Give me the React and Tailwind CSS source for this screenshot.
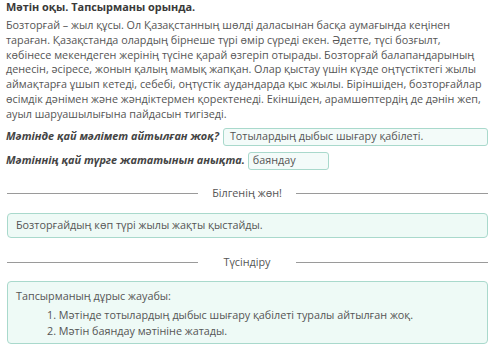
import React from 'react';

const body =
  'Бозторғай – жыл құсы. Ол Қазақстанның шөлді даласынан басқа аумағында кеңінен тараған. Қазақстанда олардың бірнеше түрі өмір сүреді екен. Әдетте, түсі бозғылт, көбінесе мекендеген жерінің түсіне қарай өзгеріп отырады. Бозторғай балапандарының денесін, әсіресе, жонын қалың мамық жапқан. Олар қыстау үшін күзде оңтүстіктегі жылы аймақтарға ұшып кетеді, себебі, оңтүстік аудандарда қыс жылы. Біріншіден, бозторғайлар өсімдік дәнімен және жәндіктермен қоректенеді. Екіншіден, арамшөптердің де дәнін жеп, ауыл шаруашылығына пайдасын тигізеді.';

function Divider({ label }) {
  return (
    <div className="flex items-center h-[20px]">
      <div className="w-[191px] h-px bg-[#9a9a9a]" />
      <div className="flex-1 text-center text-[#555]">{label}</div>
      <div className="w-[192px] h-px bg-[#9a9a9a]" />
    </div>
  );
}

export default function App() {
  return (
    <div className="w-[500px] h-[354px] bg-white overflow-hidden pl-[6px] pr-[12px] text-[10.8px] text-[#555]" style={{ fontFamily: '"Open Sans", sans-serif' }}>
      <h1 className="font-bold text-[10.9px] text-[#3a3a3a] leading-[14px]">Мәтін оқы. Тапсырманы орында.</h1>
      <p className="mt-[4px] leading-[14.8px]">{body}</p>

      <div className="mt-[6px] flex items-center h-[18px] font-bold italic text-[#444] text-[10.9px]">
        <span>Мәтінде қай мәлімет айтылған жоқ?</span>
        <div className="ml-[4px] flex-1 h-[18px] rounded-[3px] border border-[#a9d9cc] bg-[#f3fbf9] px-[6px] flex items-center font-normal not-italic text-[#555] text-[10.8px]">
          Тотылардың дыбыс шығару қабілеті.
        </div>
      </div>

      <div className="mt-[6px] flex items-center h-[18px] font-bold italic text-[#444] text-[10.9px]">
        <span>Мәтіннің қай түрге жататынын анықта.</span>
        <div className="ml-[3px] w-[81px] h-[18px] rounded-[3px] border border-[#a9d9cc] bg-[#f3fbf9] px-[4px] flex items-center font-normal not-italic text-[#555] text-[10.8px]">
          баяндау
        </div>
      </div>

      <div className="mt-[14px] pl-[1px]">
        <Divider label="Білгенің жөн!" />
      </div>

      <div className="mt-[9px] ml-[1px] h-[25px] rounded-[4px] border border-[#a9d9cc] bg-[#eefaf6] px-[8px] flex items-center">
        Бозторғайдың көп түрі жылы жақты қыстайды.
      </div>

      <div className="mt-[15px] pl-[1px]">
        <Divider label="Түсіндіру" />
      </div>

      <div className="mt-[8px] ml-[1px] h-[63px] rounded-[4px] border border-[#a9d9cc] bg-[#eefaf6] pl-[8px] pt-[6px] leading-[16px]">
        <div>Тапсырманың дұрыс жауабы:</div>
        <ol className="mt-[3px] pl-[31px] list-decimal list-inside">
          <li>Мәтінде тотылардың дыбыс шығару қабілеті туралы айтылған жоқ.</li>
          <li>Мәтін баяндау мәтініне жатады.</li>
        </ol>
      </div>
    </div>
  );
}
